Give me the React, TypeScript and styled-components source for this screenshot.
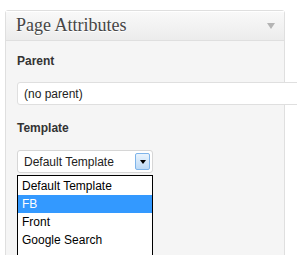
import styled, { createGlobalStyle } from "styled-components";

const GlobalStyle = createGlobalStyle`
  html, body {
    margin: 0;
    padding: 0;
    background: #ffffff;
    overflow: hidden;
  }
  body {
    font-family: "Liberation Sans", Arial, sans-serif;
  }
`;

const Page = styled.div`
  width: 297px;
  height: 255px;
  padding: 10px 0 0 5px;
  box-sizing: border-box;
  overflow: hidden;
`;

const Box = styled.div`
  width: 280px;
  height: 300px;
  box-sizing: border-box;
  border: 1px solid #dfdfdf;
  border-radius: 3px 3px 0 0;
  background: #f5f5f5;
`;

const BoxHeader = styled.div`
  display: flex;
  align-items: center;
  justify-content: space-between;
  height: 30px;
  padding: 0 9px 0 10px;
  box-sizing: border-box;
  border-bottom: 1px solid #dfdfdf;
  background: linear-gradient(to bottom, #f9f9f9, #ececec);
  box-shadow: inset 0 1px 0 #ffffff;
`;

const Title = styled.h3`
  margin: 0;
  font-family: "Liberation Serif", Georgia, serif;
  font-weight: normal;
  font-size: 18px;
  color: #464646;
  text-shadow: 0 1px 0 #ffffff;
`;

const Toggle = styled.span`
  width: 0;
  height: 0;
  border-left: 4px solid transparent;
  border-right: 4px solid transparent;
  border-top: 6px solid #b4b4b4;
`;

const BoxBody = styled.div`
  padding: 13px 0 0 11px;
`;

const Label = styled.p<{ $gap: number }>`
  margin: 0 0 ${(p) => p.$gap}px;
  font-size: 12px;
  line-height: 14px;
  font-weight: bold;
  color: #333333;
`;

const TextSelect = styled.div`
  width: 290px;
  height: 23px;
  box-sizing: border-box;
  display: flex;
  align-items: center;
  padding-left: 6px;
  margin-bottom: 16px;
  border: 1px solid #dfdfdf;
  border-radius: 3px 0 0 3px;
  background: #ffffff;
  font-size: 12px;
  color: #222222;
`;

const SelectWrap = styled.div`
  position: relative;
  width: 136px;
`;

const DropSelect = styled.div`
  height: 23px;
  box-sizing: border-box;
  display: flex;
  align-items: center;
  justify-content: space-between;
  padding: 0 2px 0 6px;
  border: 1px solid #d6d6d6;
  border-radius: 3px;
  background: #ffffff;
  font-size: 12px;
  color: #222222;
`;

const ArrowButton = styled.span`
  width: 15px;
  height: 17px;
  box-sizing: border-box;
  display: flex;
  align-items: center;
  justify-content: center;
  border: 1px solid #7eb4ea;
  border-radius: 2px;
  background: linear-gradient(to bottom, #eaf4fd, #bcd9f5);
`;

const ArrowGlyph = styled.span`
  width: 0;
  height: 0;
  border-left: 3.5px solid transparent;
  border-right: 3.5px solid transparent;
  border-top: 4px solid #000000;
`;

const Menu = styled.ul`
  position: absolute;
  top: 25px;
  left: 0;
  width: 136px;
  height: 100px;
  box-sizing: border-box;
  margin: 0;
  padding: 1px 0 0;
  list-style: none;
  border: 1px solid #000000;
  background: #ffffff;
`;

const Option = styled.li<{ $active?: boolean }>`
  height: 18px;
  line-height: 18px;
  padding-left: 4px;
  font-size: 12px;
  color: ${(p) => (p.$active ? "#ffffff" : "#000000")};
  background: ${(p) => (p.$active ? "#3399ff" : "transparent")};
`;

const templates = ["Default Template", "FB", "Front", "Google Search"];

export default function App() {
  return (
    <>
      <GlobalStyle />
      <Page>
        <Box>
          <BoxHeader>
            <Title>Page Attributes</Title>
            <Toggle />
          </BoxHeader>
          <BoxBody>
            <Label $gap={14}>Parent</Label>
            <TextSelect>(no parent)</TextSelect>
            <Label $gap={15}>Template</Label>
            <SelectWrap>
              <DropSelect>
                Default Template
                <ArrowButton>
                  <ArrowGlyph />
                </ArrowButton>
              </DropSelect>
              <Menu>
                {templates.map((t) => (
                  <Option key={t} $active={t === "FB"}>
                    {t}
                  </Option>
                ))}
              </Menu>
            </SelectWrap>
          </BoxBody>
        </Box>
      </Page>
    </>
  );
}
